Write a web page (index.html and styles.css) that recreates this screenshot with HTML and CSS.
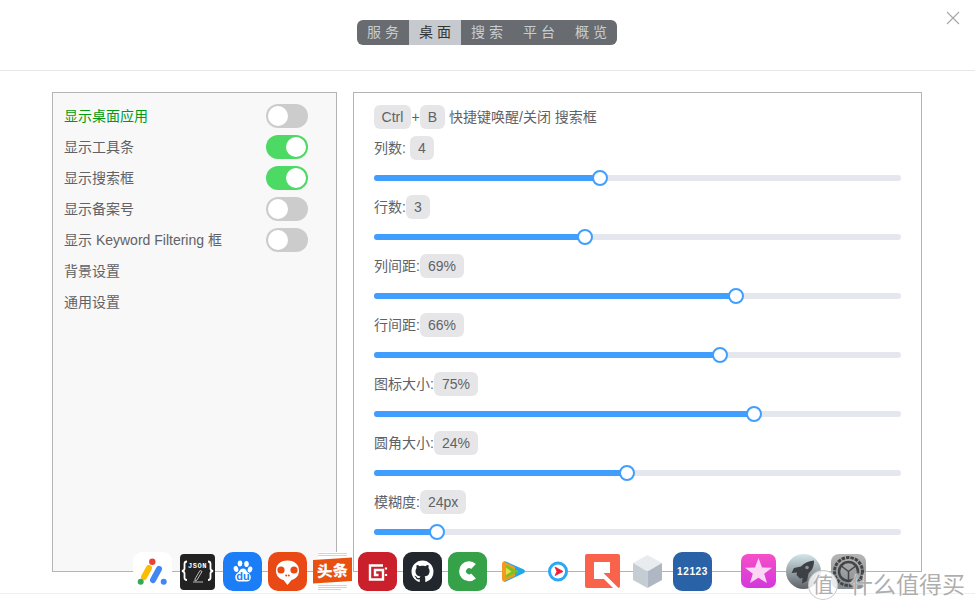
FILE: index.html
```html
<!DOCTYPE html>
<html lang="zh-CN">
<head>
<meta charset="utf-8">
<title>桌面设置</title>
<link rel="stylesheet" href="styles.css">
</head>
<body>
<div class="page">
  <header class="header">
    <nav class="tabs">
      <span class="tab">服务</span>
      <span class="tab tab-active">桌面</span>
      <span class="tab">搜索</span>
      <span class="tab">平台</span>
      <span class="tab">概览</span>
    </nav>
    <svg class="close" width="14" height="14" viewBox="0 0 14 14"><path d="M1 1l12 12M13 1L1 13" stroke="#a6a6a6" stroke-width="1.1" fill="none"/></svg>
  </header>
  <main class="main">
    <aside class="side">
      <div class="side-row"><span class="side-label side-label-active">显示桌面应用</span><span class="switch"><span class="knob"></span></span></div>
      <div class="side-row"><span class="side-label">显示工具条</span><span class="switch switch-on"><span class="knob"></span></span></div>
      <div class="side-row"><span class="side-label">显示搜索框</span><span class="switch switch-on"><span class="knob"></span></span></div>
      <div class="side-row"><span class="side-label">显示备案号</span><span class="switch"><span class="knob"></span></span></div>
      <div class="side-row"><span class="side-label">显示 Keyword Filtering 框</span><span class="switch"><span class="knob"></span></span></div>
      <div class="side-row"><span class="side-label">背景设置</span></div>
      <div class="side-row"><span class="side-label">通用设置</span></div>
    </aside>
    <section class="panel">
      <div class="shortcut"><span class="chip chip-wide">Ctrl</span><span class="plus">+</span><span class="chip chip-b">B</span><span class="shortcut-text">快捷键唤醒/关闭 搜索框</span></div>
      <div class="setting">
        <div class="setting-head"><span class="name">列数:</span><span class="chip chip-gap">4</span></div>
        <div class="track"><div class="fill" style="width:42.9%"><span class="thumb"></span></div></div>
      </div>
      <div class="setting">
        <div class="setting-head"><span class="name">行数:</span><span class="chip">3</span></div>
        <div class="track"><div class="fill" style="width:40%"><span class="thumb"></span></div></div>
      </div>
      <div class="setting">
        <div class="setting-head"><span class="name">列间距:</span><span class="chip">69%</span></div>
        <div class="track"><div class="fill" style="width:68.7%"><span class="thumb"></span></div></div>
      </div>
      <div class="setting">
        <div class="setting-head"><span class="name">行间距:</span><span class="chip">66%</span></div>
        <div class="track"><div class="fill" style="width:65.6%"><span class="thumb"></span></div></div>
      </div>
      <div class="setting">
        <div class="setting-head"><span class="name">图标大小:</span><span class="chip">75%</span></div>
        <div class="track"><div class="fill" style="width:72.1%"><span class="thumb"></span></div></div>
      </div>
      <div class="setting">
        <div class="setting-head"><span class="name">圆角大小:</span><span class="chip">24%</span></div>
        <div class="track"><div class="fill" style="width:48%"><span class="thumb"></span></div></div>
      </div>
      <div class="setting">
        <div class="setting-head"><span class="name">模糊度:</span><span class="chip">24px</span></div>
        <div class="track"><div class="fill" style="width:12%"><span class="thumb"></span></div></div>
      </div>
    </section>
  </main>
</div>

<div class="dock">
  <svg class="app" viewBox="0 0 39 39"><rect width="39" height="39" rx="9" fill="#fff"/><circle cx="19.3" cy="9.7" r="3.2" fill="#ea4335"/><path d="M16 16L11 25" stroke="#fbbc04" stroke-width="6" stroke-linecap="round"/><path d="M26 17L20 28" stroke="#4285f4" stroke-width="6" stroke-linecap="round"/><circle cx="7.7" cy="29.7" r="3" fill="#34a853"/><circle cx="30.7" cy="29.7" r="3" fill="#4285f4"/></svg>
  <svg class="app" viewBox="0 0 39 39"><rect x="2" y="2" width="35" height="36" rx="4" fill="#222"/><text x="19.5" y="15.500" class="t-json">JSON</text><path d="M9 9.500Q6.500 9.500 6.500 12V16.500Q6.500 18.500 4 19Q6.500 19.500 6.500 21.500V25.500Q6.500 28 9 28M30 9.500Q32.500 9.500 32.500 12V16.500Q32.500 18.500 35 19Q32.500 19.500 32.500 21.500V25.500Q32.500 28 30 28" stroke="#fff" stroke-width="1.800" fill="none"/><path d="M22 18.500L17 27L17 29L19 28L24 19.500ZM15 30H25" stroke="#bbb" stroke-width="1" fill="none"/></svg>
  <svg class="app" viewBox="0 0 39 39"><rect width="39" height="39" rx="10" fill="#1b7ef6"/><ellipse cx="13" cy="17" rx="2.300" ry="3" fill="#fff" transform="rotate(-15 13 17)"/><ellipse cx="17" cy="11.500" rx="2.300" ry="3" fill="#fff"/><ellipse cx="23.500" cy="12" rx="2.300" ry="3" fill="#fff"/><ellipse cx="27" cy="17.500" rx="2.300" ry="3" fill="#fff" transform="rotate(15 27 17.500)"/><path d="M20 16.500C16.500 16.500 17 19.500 14.500 21C11 23 11.500 29.500 16 29.500H24C28.500 29.500 29 23 25.500 21C23 19.500 23.500 16.500 20 16.500Z" fill="#fff"/><text x="20" y="28" class="t-du">du</text></svg>
  <svg class="app" viewBox="0 0 39 39"><rect width="39" height="39" rx="10" fill="#e94914"/><path d="M19.500 8.500C12 8.500 8 13 8 18.500C8 23.500 11 27 15.500 28L19.500 33L23.500 28C28 27 31 23.500 31 18.500C31 13 27 8.500 19.500 8.500Z" fill="#fff"/><circle cx="13" cy="18" r="3.600" fill="#e94914"/><circle cx="26" cy="18" r="3.600" fill="#e94914"/><circle cx="18.200" cy="23.500" r="1" fill="#e94914"/><circle cx="20.800" cy="23.500" r="1" fill="#e94914"/></svg>
  <svg class="app" viewBox="0 0 39 39"><rect x="5" y="0" width="29" height="39" fill="#fff"/><path d="M5 1.500H34M5 3.500H34M5 33.500H34M5 35.500H34M5 37.500H28" stroke="#c8c8c8" stroke-width=".8"/><path d="M0 8L39 5.500V29L0 31.500Z" fill="#e8510f"/><text x="19.500" y="24.500" class="t-toutiao" transform="rotate(-3 19.500 18)">头条</text></svg>
  <svg class="app" viewBox="0 0 39 39"><rect width="39" height="39" rx="9" fill="#c9202b"/><path d="M25 13.500H12V27.500H25V18H17V23H20.500" stroke="#fff" stroke-width="2.400" fill="none"/><path d="M28 15.500V17.500M28 22V24" stroke="#fff" stroke-width="2.200"/></svg>
  <svg class="app" viewBox="0 0 39 39"><rect width="39" height="39" rx="9" fill="#22272e"/><g transform="translate(8.500 8.500) scale(1.375)"><path fill="#fff" d="M8 0C3.580 0 0 3.580 0 8c0 3.540 2.290 6.530 5.470 7.590.4.070.55-.17.55-.38 0-.19-.01-.82-.01-1.490-2.010.37-2.530-.49-2.690-.94-.09-.23-.48-.94-.82-1.130-.28-.15-.68-.52-.01-.53.630-.01 1.080.58 1.230.82.720 1.210 1.870.87 2.330.66.070-.52.280-.87.510-1.070-1.780-.2-3.640-.89-3.640-3.950 0-.87.310-1.590.820-2.150-.08-.2-.36-1.020.08-2.120 0 0 .67-.21 2.200.82.640-.18 1.320-.27 2-.27.680 0 1.360.09 2 .27 1.530-1.040 2.200-.82 2.200-.82.440 1.100.160 1.920.080 2.120.510.560.820 1.270.820 2.150 0 3.070-1.870 3.750-3.650 3.950.290.250.540.730.540 1.480 0 1.070-.01 1.930-.01 2.200 0 .21.150.46.550.38A8.013 8.013 0 0016 8c0-4.420-3.580-8-8-8z"/></g></svg>
  <svg class="app" viewBox="0 0 39 39"><rect width="39" height="39" rx="9" fill="#35a24a"/><path d="M25.500 14.500A6.500 6.500 0 1 0 25.500 24" fill="none" stroke="#fff" stroke-width="7"/></svg>
  <svg class="app" viewBox="0 0 39 39"><path d="M10 11Q10 8.500 13 9.500L31 17.500Q33 19.300 31 21L13 29.500Q10 30.500 10 28Z" fill="#22a7e8"/><path d="M9 12Q9 9 12 10L22 15V24L12 29Q9 30 9 27Z" fill="#f39a1f"/><path d="M13 13L26 19.500L13 25.500Z" fill="#7cc022"/><path d="M13 15.500L18.500 19.500L13 23Z" fill="#dfe04a"/></svg>
  <svg class="app" viewBox="0 0 39 39"><circle cx="20" cy="19.500" r="8.500" fill="#fff" stroke="#2aa7f5" stroke-width="3"/><path d="M17 15L25 19.500L17 23.500L19 19.500Z" fill="#f21b35" stroke="#f21b35" stroke-width=".8"/></svg>
  <svg class="app" viewBox="0 0 39 39"><rect x="2" y="2" width="35" height="34" rx="2" fill="#f9634c"/><path d="M11 10H27V21H20.500L35.500 36H30L21 27H11Z" fill="#fff"/></svg>
  <svg class="app" viewBox="0 0 39 39"><path d="M19.500 3L34 11L19.500 19.500L5 11Z" fill="#e9ecef"/><path d="M5 11L19.500 19.500V36L5 28Z" fill="#c5ccd4"/><path d="M34 11L19.500 19.500V36L34 28Z" fill="#aeb7c2"/></svg>
  <svg class="app" viewBox="0 0 39 39"><rect width="39" height="39" rx="9" fill="#2a62a8"/><text x="19.500" y="23" class="t-12123">12123</text></svg>
  <svg class="app app-split" viewBox="0 0 39 39"><defs><linearGradient id="gs" x1="0" y1="0" x2="0" y2="1"><stop offset="0" stop-color="#f64fc8"/><stop offset="1" stop-color="#d338dd"/></linearGradient></defs><rect x="2" y="2" width="35" height="34" rx="7" fill="url(#gs)"/><path d="M19.500 6L23 15.500L33 15.800L25.200 21.800L28 31L19.500 25.700L11 31L13.800 21.800L6 15.800L16 15.500Z" fill="#fcd6f5"/></svg>
  <svg class="app" viewBox="0 0 39 39"><defs><linearGradient id="gr" x1="0" y1="0" x2="0" y2="1"><stop offset="0" stop-color="#d3e6ea"/><stop offset="1" stop-color="#5d6166"/></linearGradient></defs><circle cx="19.500" cy="19.500" r="17.500" fill="url(#gr)"/><path d="M30 8.500C24 9 20 11 17 14.500L10 16L7.500 21L13 20.500L12.500 23L16 26.500L18.500 26L18 31.500L23 29L24.500 21.500C28 18.500 30 14.500 30 8.500Z" fill="#3d4045"/><circle cx="23" cy="15.500" r="1.800" fill="#8d9298"/></svg>
  <svg class="app" viewBox="0 0 39 39"><defs><linearGradient id="gg" x1="0" y1="0" x2="0" y2="1"><stop offset="0" stop-color="#b5b5b5"/><stop offset="1" stop-color="#828b93"/></linearGradient></defs><rect x="2" y="2" width="35" height="35" rx="8" fill="url(#gg)"/><circle cx="19.500" cy="19.500" r="14" fill="none" stroke="#444" stroke-width="3" stroke-dasharray="3.500 1"/><circle cx="19.500" cy="19.500" r="9.500" fill="none" stroke="#444" stroke-width="2.500"/><path d="M19.500 19.500L11 13M19.500 19.500L28 13M19.500 19.500V29" stroke="#444" stroke-width="1.500"/></svg>
</div>

<div class="mark"><span class="mark-badge">值</span><span class="mark-text">什么值得买</span></div>
</body>
</html>
```
FILE: styles.css
```css
* { box-sizing: border-box; }
html, body { margin: 0; padding: 0; height: 100%; background: #fff; overflow: hidden; }
body {
  font-family: "Liberation Sans", "Noto Sans CJK SC", sans-serif;
  font-size: 14px;
  color: #606266;
  position: relative;
}
.page { display: flex; flex-direction: column; height: 594px; border-bottom: 1px solid #eee; }

.header {
  height: 71px;
  flex: none;
  border-bottom: 1px solid #e8e8e8;
  display: flex;
  justify-content: center;
  padding: 20px 1px 0 0;
  position: relative;
}
.tabs { display: flex; height: 25px; border-radius: 6px; overflow: hidden; background: #686c70; }
.tab {
  width: 52px;
  line-height: 25px;
  padding-left: 10px;
  letter-spacing: 4px;
  color: #c9cdd1;
  white-space: nowrap;
}
.tab-active { background: #c6cacf; color: #333; }
.close { position: absolute; top: 11px; right: 15px; }

.main { flex: 1; display: flex; gap: 16px; padding: 21px 53px 21px 52px; min-height: 0; }

.side {
  width: 285px;
  flex: none;
  background: #f8f8f8;
  border: 1px solid #b4b4b4;
  padding: 7px 28px 0 11px;
}
.side-row { height: 31px; display: flex; align-items: center; justify-content: space-between; }
.side-label { padding-bottom: 2px; }
.side-label-active { color: #009a10; }
.switch {
  width: 42px;
  height: 24px;
  border-radius: 12px;
  background: #ccc;
  padding: 2px;
  display: flex;
}
.switch-on { background: #4cd964; justify-content: flex-end; }
.knob { width: 20px; height: 20px; border-radius: 50%; background: #fff; }

.panel {
  flex: 1;
  border: 1px solid #b4b4b4;
  padding: 12px 20px 0;
  overflow: hidden;
}
.chip {
  display: inline-block;
  height: 24px;
  line-height: 24px;
  padding: 0 8px;
  border-radius: 6px;
  background: #e6e6e8;
}
.chip-wide { width: 37px; padding: 0; text-align: center; }
.chip-b { width: 25px; padding: 0; text-align: center; }
.chip-gap { margin-left: 4px; }
.shortcut { display: flex; align-items: center; height: 24px; }
.plus { width: 9px; text-align: center; }
.shortcut-text { margin-left: 4px; padding-bottom: 2px; }
.setting { height: 59px; }
.shortcut + .setting { margin-top: 7px; }
.setting-head { display: flex; align-items: center; height: 24px; }
.name { padding-bottom: 2px; }
.track {
  height: 6px;
  margin-top: 15px;
  border-radius: 3px;
  background: #e4e7ed;
}
.fill { height: 6px; border-radius: 3px; background: #409eff; position: relative; }
.thumb {
  position: absolute;
  right: -8px;
  top: -5px;
  width: 16px;
  height: 16px;
  border-radius: 50%;
  background: #fff;
  border: 2px solid #409eff;
}

.dock {
  position: absolute;
  left: 133px;
  top: 552px;
  display: flex;
  gap: 6px;
}
.app { width: 39px; height: 39px; flex: none; display: block; }
.app-split { margin-left: 21px; }
.t-json { font: bold 7px "Liberation Mono", monospace; fill: #fff; text-anchor: middle; letter-spacing: .5px; }
.t-du { font: bold 11px "Liberation Sans", sans-serif; fill: #1b7ef6; text-anchor: middle; }
.t-toutiao { font: 900 15.500px "Noto Sans CJK SC", sans-serif; fill: #fff; text-anchor: middle; }
.t-12123 { font: bold 10px "Liberation Sans", sans-serif; fill: #fff; text-anchor: middle; letter-spacing: .6px; }

.mark {
  position: absolute;
  left: 808px;
  top: 570px;
  display: flex;
  align-items: center;
  gap: 12px;
  color: rgba(160, 160, 160, .85);
  text-shadow: 0 0 2px #fff, 0 0 2px #fff;
}
.mark-badge {
  width: 30px;
  height: 30px;
  line-height: 28px;
  border-radius: 50%;
  text-align: center;
  font-size: 21px;
  border: 1px solid rgba(190, 190, 190, .8);
  background: rgba(255, 255, 255, .8);
}
.mark-text { font-size: 23px; line-height: 30px; white-space: nowrap; }
```
